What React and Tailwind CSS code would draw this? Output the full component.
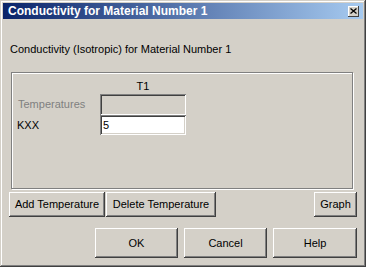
const face = '#d4d0c8'

function Btn({ children, className = '' }) {
  return (
    <div
      className={`flex items-center justify-center bg-[#d4d0c8] text-black shadow-[inset_-1px_-1px_#404040,inset_1px_1px_#ffffff,inset_-2px_-2px_#808080] ${className}`}
    >
      {children}
    </div>
  )
}

export default function App() {
  return (
    <div
      className="w-[366px] h-[267px] flex flex-col bg-[#d4d0c8] p-[3px] text-[11px] leading-[13px] text-black shadow-[inset_-1px_-1px_#404040,inset_1px_1px_#d4d0c8,inset_-2px_-2px_#808080,inset_2px_2px_#ffffff]"
      style={{ fontFamily: '"Liberation Sans", Arial, sans-serif', background: face }}
    >
      {/* title bar */}
      <div className="h-[16px] flex items-center justify-between pl-[5px] pr-[4px] bg-[linear-gradient(90deg,#0a246a_0%,#a6caf0_100%)]">
        <span className="text-white font-bold text-[12px] leading-[14px]">Conductivity for Material Number 1</span>
        <div className="w-[11px] h-[11px] flex items-center justify-center bg-[#d4d0c8] shadow-[inset_-1px_-1px_#404040,inset_1px_1px_#ffffff]">
          <svg width="7" height="6" viewBox="0 0 7 6">
            <path d="M0.5 0.5 L6.5 5.5 M6.5 0.5 L0.5 5.5" stroke="#000" strokeWidth="1.3" />
          </svg>
        </div>
      </div>

      <div className="flex-1 flex flex-col">
        <div className="mt-[24px] pl-[7px]">Conductivity (Isotropic) for Material Number 1</div>

        {/* group box */}
        <div className="mt-[16px] ml-[8px] w-[342px] h-[117px] border border-[#808080] shadow-[inset_1px_1px_#ffffff,1px_1px_0_#ffffff] flex flex-col pl-[4px]">
          <div className="mt-[7px] ml-[84px] w-[86px] text-center">T1</div>
          <div className="mt-[1px] flex items-center">
            <span className="w-[84px] pl-[2px] text-[#808080]">Temperatures</span>
            <div className="w-[86px] h-[21px] bg-[#d4d0c8] shadow-[inset_1px_1px_#808080,inset_-1px_-1px_#ffffff,inset_2px_2px_#404040,inset_-2px_-2px_#d4d0c8]" />
          </div>
          <div className="flex items-center">
            <span className="w-[84px] pl-[1px]">KXX</span>
            <div className="w-[86px] h-[20px] bg-white flex items-center pl-[3px] shadow-[inset_1px_1px_#808080,inset_-1px_-1px_#ffffff,inset_2px_2px_#404040,inset_-2px_-2px_#d4d0c8]">
              5
            </div>
          </div>
        </div>

        {/* temperature buttons */}
        <div className="mt-[3px] ml-[6px] flex h-[25px]">
          <Btn className="w-[96px]">Add Temperature</Btn>
          <Btn className="w-[110px] ml-[1px]">Delete Temperature</Btn>
          <Btn className="w-[43px] ml-auto mr-[6px]">Graph</Btn>
        </div>

        {/* dialog buttons */}
        <div className="mt-[11px] ml-[92px] flex gap-[6px] h-[30px]">
          <Btn className="w-[83px]">OK</Btn>
          <Btn className="w-[83px]">Cancel</Btn>
          <Btn className="w-[84px]">Help</Btn>
        </div>
      </div>
    </div>
  )
}
